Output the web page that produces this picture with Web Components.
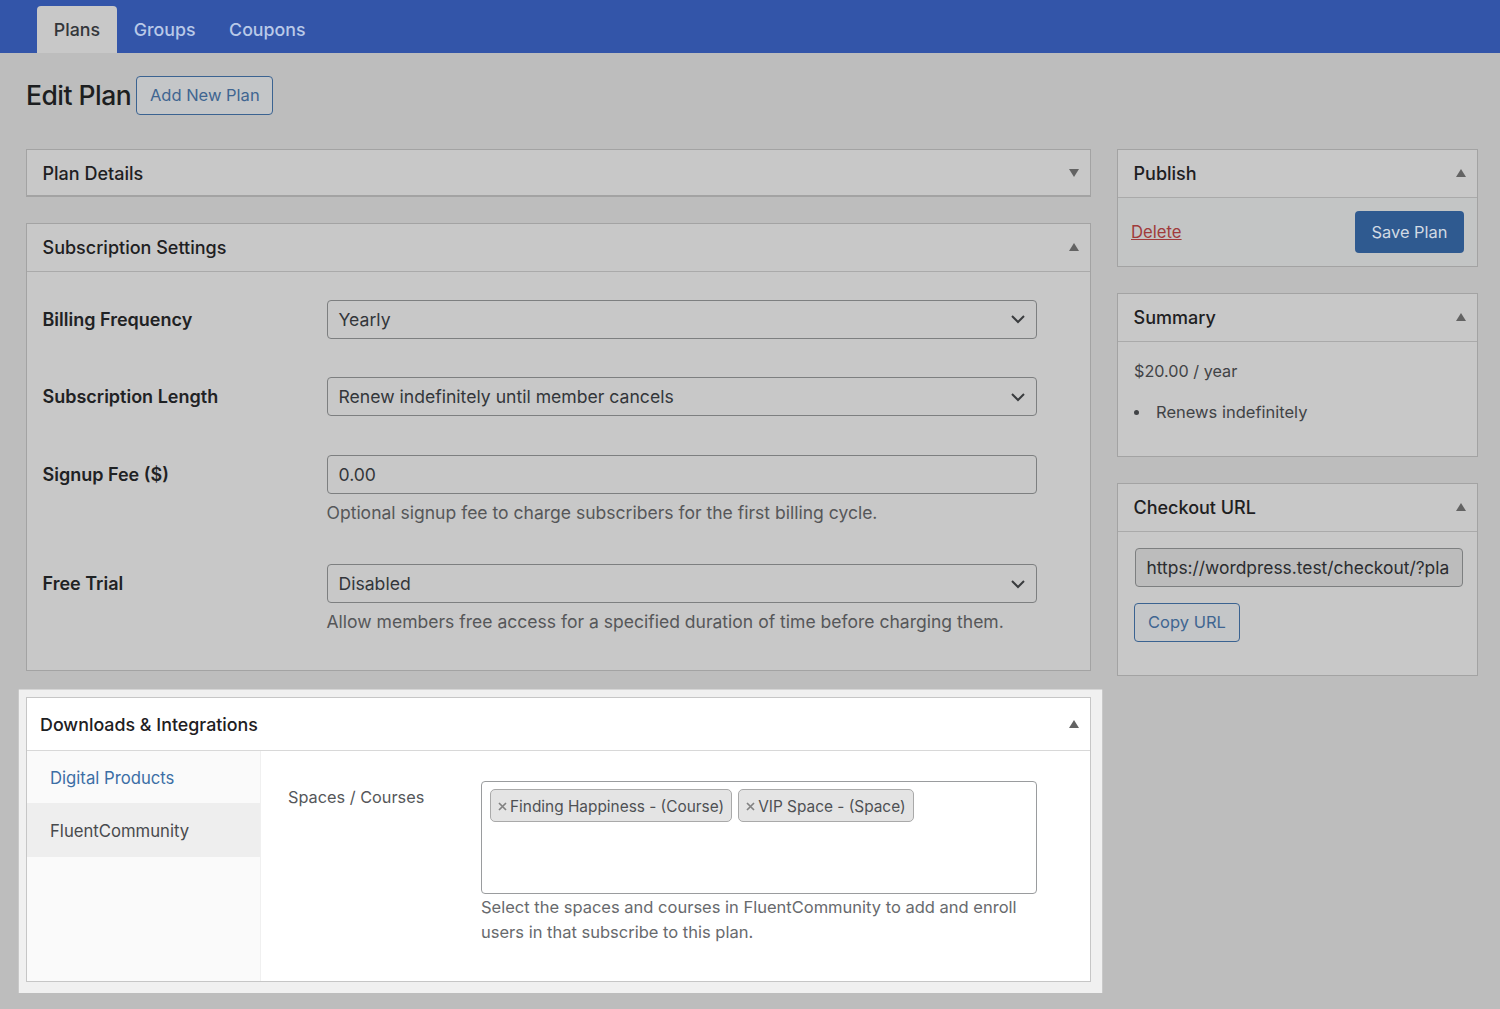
<!DOCTYPE html>
<html lang="en">
<head>
<meta charset="utf-8">
<title>Edit Plan</title>
<style>
  html, body { margin: 0; height: 1009px; overflow: hidden; }
  body {
    background: #bdbdbd;
    color: #1f2224;
    font-family: Inter, "Liberation Sans", sans-serif;
    font-size: 17.5px;
  }
</style>
</head>
<body>
<plan-tabs></plan-tabs>
<plan-page></plan-page>

<script>
// shared bits of css
const btnCss = `
  :host { display: inline-block; }
  .btn {
    box-sizing: border-box;
    display: flex;
    align-items: center;
    justify-content: center;
    height: 38.5px;
    border: 1.5px solid #3b6391;
    border-radius: 4px;
    color: #3f6591;
    background: #c4c6c8;
    font-size: 16.5px;
    white-space: nowrap;
  }
`

class PlanTabs extends HTMLElement {
    constructor() {
        super()
        this.attachShadow({ mode: 'open' })
    }

    connectedCallback() {
        this.shadowRoot.innerHTML = `
      <style>
        :host {
          display: flex;
          align-items: flex-end;
          box-sizing: border-box;
          height: 53px;
          padding-left: 37px;
          background: #3355a9;
          font-size: 17.8px;
          font-weight: 500;
        }
        .tab {
          display: flex;
          align-items: center;
          height: 47px;
          padding: 0 16.75px;
          color: #b9c9e8;
        }
        .active {
          width: 80px;
          box-sizing: border-box;
          justify-content: center;
          padding: 0;
          background: #c8c8c8;
          color: #33363a;
          border-radius: 4px 4px 0 0;
        }
      </style>
      <div class="tab active">Plans</div>
      <div class="tab">Groups</div>
      <div class="tab">Coupons</div>
    `
    }
}

class PlanBox extends HTMLElement {
    constructor() {
        super()
        this.attachShadow({ mode: 'open' })
    }

    connectedCallback() {
        const closed = this.hasAttribute('closed')
        const arrow = closed ? 'M1 1h10L6 9z' : 'M1 9h10L6 1z'
        this.shadowRoot.innerHTML = `
      <style>
        :host {
          display: block;
          box-sizing: border-box;
          border: 1px solid #a3a3a3;
          background: #c8c8c8;
        }
        :host([light]) {
          background: #fff;
          border-color: #c6c6c6;
          box-shadow: 2px 1.75px 0 9.25px #f0f0f0;
          position: relative;
        }
        header {
          display: flex;
          align-items: center;
          justify-content: space-between;
          box-sizing: border-box;
          height: 46.5px;
          padding: 0 10px 0 15.5px;
          font-size: 18px;
          font-weight: 500;
          color: #1e2022;
        }
        :host([light]) header { height: 52px; padding-left: 13px; font-size: 17.85px; }
        .body { border-top: 1.5px solid #aaa; }
        :host([light]) .body { border-top-color: #d8d8d8; }
        :host([closed]) .body { display: none; }
        :host([closed]) { border-bottom-width: 2px; }
        :host([closed]) header { height: 45px; padding-top: 1px; }
        svg { width: 12px; height: 10px; fill: #636363; }
      </style>
      <header>
        <span>${this.getAttribute('heading')}</span>
        <svg viewBox="0 0 12 10"><path d="${arrow}"/></svg>
      </header>
      <div class="body"><slot></slot></div>
    `
    }
}

class PlanField extends HTMLElement {
    constructor() {
        super()
        this.attachShadow({ mode: 'open' })
    }

    connectedCallback() {
        this.shadowRoot.innerHTML = `
      <style>
        :host {
          display: grid;
          grid-template-columns: 284.5px 710px;
          margin-bottom: 38.5px;
        }
        .label {
          padding-top: 1px;
          height: 37.5px;
          line-height: 38.5px;
          font-size: 18px;
          font-weight: 600;
          color: #1f2224;
        }
      </style>
      <div class="label">${this.getAttribute('label')}</div>
      <div><slot></slot></div>
    `
    }
}

class PlanControl extends HTMLElement {
    constructor() {
        super()
        this.attachShadow({ mode: 'open' })
    }

    connectedCallback() {
        const chevron = this.hasAttribute('select')
            ? `<svg viewBox="0 0 16 10"><path d="M2 2l6 6 6-6"/></svg>`
            : ''
        this.shadowRoot.innerHTML = `
      <style>
        :host {
          display: block;
          box-sizing: border-box;
          height: 39px;
          border: 1.5px solid #7d7f80;
          border-radius: 4px;
          font-size: 17.6px;
          color: #33363a;
        }
        :host([sunken]) {
          background: #bcbcbc;
          color: #2b2d30;
          overflow: hidden;
          font-size: 17.4px;
        }
        .in {
          display: flex;
          align-items: center;
          justify-content: space-between;
          height: 100%;
          padding: 0 10px 0 10.5px;
          white-space: nowrap;
        }
        svg {
          width: 16px;
          height: 10px;
          fill: none;
          stroke: #3a3c3e;
          stroke-width: 2;
        }
      </style>
      <div class="in"><span><slot></slot></span>${chevron}</div>
    `
    }
}

class PlanHelp extends HTMLElement {
    constructor() {
        super()
        this.attachShadow({ mode: 'open' })
    }

    connectedCallback() {
        this.shadowRoot.innerHTML = `
      <style>
        :host {
          display: block;
          margin-left: -0.5px;
          height: 32px;
          line-height: 38.5px;
          font-size: 17.55px;
          color: #565759;
          white-space: nowrap;
        }
      </style>
      <slot></slot>
    `
    }
}

class PlanLinkButton extends HTMLElement {
    constructor() {
        super()
        this.attachShadow({ mode: 'open' })
    }

    connectedCallback() {
        this.shadowRoot.innerHTML = `
      <style>${btnCss}</style>
      <div class="btn" style="width:${this.getAttribute('width')}px"><slot></slot></div>
    `
    }
}

class PlanTag extends HTMLElement {
    constructor() {
        super()
        this.attachShadow({ mode: 'open' })
    }

    connectedCallback() {
        this.shadowRoot.innerHTML = `
      <style>
        :host {
          display: inline-flex;
          align-items: center;
          box-sizing: border-box;
          height: 33px;
          padding: 2px 7px 0 7px;
          border: 1px solid #a9a9a9;
          border-radius: 5px;
          background: #e4e4e4;
          color: #4f5154;
          font-size: 15.4px;
          white-space: nowrap;
        }
        svg {
          width: 9px;
          height: 9px;
          margin-right: 3px;
          stroke: #828282;
          stroke-width: 1.7;
        }
      </style>
      <svg viewBox="0 0 9 9"><path d="M1 1l7 7M8 1L1 8"/></svg>
      <slot></slot>
    `
    }
}

class PlanIntegrations extends HTMLElement {
    constructor() {
        super()
        this.attachShadow({ mode: 'open' })
    }

    connectedCallback() {
        this.shadowRoot.innerHTML = `
      <style>
        :host {
          display: grid;
          grid-template-columns: 234px 1fr;
          height: 230px;
          font-size: 16.7px;
        }
        nav {
          background: #fafafa;
          border-right: 1px solid #f0f0f0;
        }
        nav div {
          display: flex;
          align-items: center;
          box-sizing: border-box;
          height: 52px;
          padding: 1px 0 0 23px;
          color: #3c6ea5;
        }
        nav div + div {
          height: 54px;
          background: #eee;
          color: #484a4d;
        }
        .main {
          display: grid;
          grid-template-columns: 193px 556px;
          padding: 29.5px 0 0 27px;
          align-content: start;
        }
        .label { color: #55575a; line-height: 32px; font-size: 16.3px; }
        .tags {
          display: flex;
          gap: 6px;
          align-items: flex-start;
          box-sizing: border-box;
          height: 113px;
          padding: 7px 8px;
          border: 1.5px solid #9a9c9e;
          border-radius: 4px;
        }
        p {
          margin: 1px 0 0;
          font-size: 16.5px;
          line-height: 25px;
          color: #686a6d;
        }
      </style>
      <nav>
        <div>Digital Products</div>
        <div>FluentCommunity</div>
      </nav>
      <div class="main">
        <div class="label">Spaces / Courses</div>
        <div>
          <div class="tags">
            <plan-tag>Finding Happiness - (Course)</plan-tag>
            <plan-tag>VIP Space - (Space)</plan-tag>
          </div>
          <p>Select the spaces and courses in FluentCommunity to add and enroll<br>users in that subscribe to this plan.</p>
        </div>
      </div>
    `
    }
}

class PlanPage extends HTMLElement {
    constructor() {
        super()
        this.attachShadow({ mode: 'open' })
    }

    connectedCallback() {
        this.shadowRoot.innerHTML = `
      <style>
        :host {
          display: block;
          padding: 23px 22px 0 26px;
        }
        .title {
          display: flex;
          align-items: center;
          gap: 5px;
          height: 38.5px;
          margin-bottom: 34.5px;
        }
        h1 {
          margin: 0;
          font-size: 26.5px;
          font-weight: 500;
          letter-spacing: -0.5px;
          color: #1c1e20;
        }
        .cols {
          display: grid;
          grid-template-columns: 1065px 361px;
          gap: 26px;
          align-items: start;
        }
        .stack {
          display: flex;
          flex-direction: column;
          gap: 26px;
        }
        .settings { padding: 28px 0 0 15.5px; height: 398.5px; box-sizing: border-box; }
        .publish {
          display: flex;
          align-items: center;
          justify-content: space-between;
          box-sizing: border-box;
          height: 68.5px;
          padding: 0 13px;
          background: #c3c5c5;
        }
        .delete { color: #a03b3b; text-decoration: underline; font-size: 16.7px; }
        .save {
          display: flex;
          align-items: center;
          justify-content: center;
          width: 109px;
          height: 42px;
          border-radius: 4px;
          background: #2f5a90;
          color: #d2dae4;
          font-size: 16.4px;
        }
        .summary { box-sizing: border-box; height: 114.5px; padding: 17px 16px 0; color: #414346; font-size: 16.5px; }
        .summary div { line-height: 24px; font-size: 16.2px; }
        ul { margin: 17px 0 0; padding: 0; line-height: 24px; list-style: none; }
        li { display: flex; align-items: center; gap: 17px; }
        li::before { content: ""; width: 5px; height: 5px; margin-top: 1px; border-radius: 50%; background: #414346; }
        .checkout { box-sizing: border-box; height: 143px; padding: 16px 14px 0 16px; }
        .checkout plan-control { margin-left: 1px; }
        .checkout plan-link-button { display: block; margin: 16.5px 0 0 0; }
      </style>
      <div class="title">
        <h1>Edit Plan</h1>
        <plan-link-button width="137">Add New Plan</plan-link-button>
      </div>
      <div class="cols">
        <div class="stack">
          <plan-box heading="Plan Details" closed></plan-box>
          <plan-box heading="Subscription Settings">
            <div class="settings">
              <plan-field label="Billing Frequency">
                <plan-control select>Yearly</plan-control>
              </plan-field>
              <plan-field label="Subscription Length">
                <plan-control select>Renew indefinitely until member cancels</plan-control>
              </plan-field>
              <plan-field label="Signup Fee ($)">
                <plan-control>0.00</plan-control>
                <plan-help>Optional signup fee to charge subscribers for the first billing cycle.</plan-help>
              </plan-field>
              <plan-field label="Free Trial">
                <plan-control select>Disabled</plan-control>
                <plan-help>Allow members free access for a specified duration of time before charging them.</plan-help>
              </plan-field>
            </div>
          </plan-box>
          <plan-box heading="Downloads &amp; Integrations" light>
            <plan-integrations></plan-integrations>
          </plan-box>
        </div>
        <div class="stack">
          <plan-box heading="Publish">
            <div class="publish">
              <span class="delete">Delete</span>
              <span class="save">Save Plan</span>
            </div>
          </plan-box>
          <plan-box heading="Summary">
            <div class="summary">
              <div>$20.00 / year</div>
              <ul><li>Renews indefinitely</li></ul>
            </div>
          </plan-box>
          <plan-box heading="Checkout URL">
            <div class="checkout">
              <plan-control sunken>https://wordpress.test/checkout/?pla</plan-control>
              <plan-link-button width="106">Copy URL</plan-link-button>
            </div>
          </plan-box>
        </div>
      </div>
    `
    }
}

customElements.define('plan-tabs', PlanTabs)
customElements.define('plan-box', PlanBox)
customElements.define('plan-field', PlanField)
customElements.define('plan-control', PlanControl)
customElements.define('plan-help', PlanHelp)
customElements.define('plan-link-button', PlanLinkButton)
customElements.define('plan-tag', PlanTag)
customElements.define('plan-integrations', PlanIntegrations)
customElements.define('plan-page', PlanPage)
</script>
</body>
</html>
